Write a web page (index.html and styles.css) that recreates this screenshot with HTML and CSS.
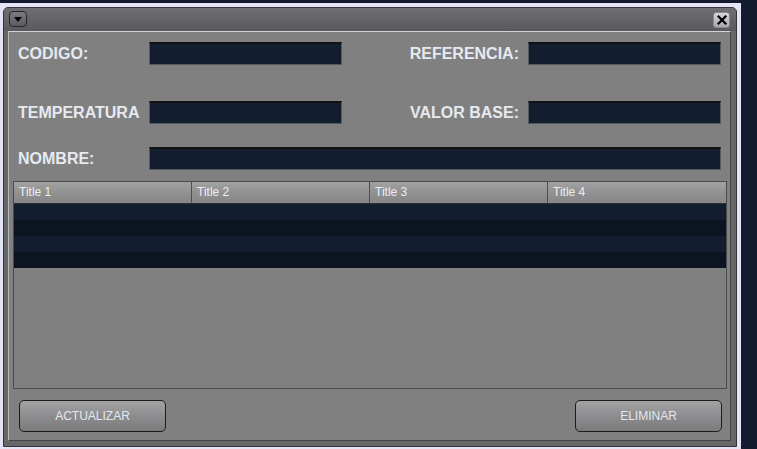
FILE: index.html
```html
<!DOCTYPE html>
<html>
<head>
<meta charset="utf-8">
<link rel="stylesheet" href="styles.css">
</head>
<body>
<div class="screen">
  <div class="window">
    <div class="titlebar">
      <button class="tb-btn tb-toggle" aria-label="menu">
        <svg width="8" height="5" viewBox="0 0 8 5"><polygon points="0,0 8,0 4,5" fill="#000"/></svg>
      </button>
      <button class="tb-btn tb-close" aria-label="close">
        <svg width="10" height="10" viewBox="0 0 10 10"><path d="M1.5 1.5 L8.5 8.5 M8.5 1.5 L1.5 8.5" stroke="#000" stroke-width="2.2" stroke-linecap="square"/></svg>
      </button>
    </div>
    <div class="content">
      <div class="form">
        <div class="row row1">
          <label class="lbl">CODIGO:</label>
          <div class="field"></div>
          <label class="lbl lbl-right">REFERENCIA:</label>
          <div class="field"></div>
        </div>
        <div class="row row2">
          <label class="lbl">TEMPERATURA</label>
          <div class="field"></div>
          <label class="lbl lbl-right">VALOR BASE:</label>
          <div class="field"></div>
        </div>
        <div class="row row3">
          <label class="lbl">NOMBRE:</label>
          <div class="field field-wide"></div>
        </div>
      </div>
      <div class="table">
        <div class="thead">
          <div class="th">Title 1</div>
          <div class="th">Title 2</div>
          <div class="th">Title 3</div>
          <div class="th">Title 4</div>
        </div>
        <div class="tr"></div>
        <div class="tr alt"></div>
        <div class="tr"></div>
        <div class="tr alt"></div>
      </div>
      <div class="actions">
        <button class="btn">ACTUALIZAR</button>
        <button class="btn">ELIMINAR</button>
      </div>
    </div>
  </div>
</div>
</body>
</html>
```
FILE: styles.css
```css
html, body {
  margin: 0;
  padding: 0;
}
body {
  background: #121c2e;
  width: 757px;
  height: 449px;
  overflow: hidden;
  font-family: "Liberation Sans", Arial, sans-serif;
}
.screen {
  margin-top: 3px;
  width: 741px;
  height: 446px;
  background: #e4e4f6;
  padding: 4px 4px 2px 3px;
  box-sizing: border-box;
}
.window {
  height: 440px;
  border: 1px solid #363636;
  border-radius: 5px 5px 0 0;
  background: #676767;
  display: flex;
  flex-direction: column;
  box-sizing: border-box;
  overflow: hidden;
}
.titlebar {
  height: 23px;
  flex: none;
  display: flex;
  justify-content: space-between;
  align-items: flex-start;
  padding: 3px 6px 0 5px;
  box-sizing: border-box;
  background: linear-gradient(#6f6f73, #5a5a5e);
}
.tb-btn {
  padding: 0;
  margin: 0;
  display: flex;
  align-items: center;
  justify-content: center;
  box-sizing: border-box;
}
.tb-toggle {
  width: 18px;
  height: 16px;
  border: 1px solid #262626;
  border-radius: 4px;
  background: linear-gradient(#7c7c7e, #5c5c5e);
}
.tb-close {
  width: 17px;
  height: 16px;
  margin-top: 1px;
  border: 1px solid #8a8a8a;
  border-radius: 3px;
  background: linear-gradient(#d6d6d8, #a9a9ab);
}
.content {
  flex: 1;
  margin: 0 5px 5px 4px;
  background: #808080;
  border-top: 1px solid #d2d2d2;
  border-left: 1px solid #b8b8b8;
  border-right: 1px solid #454545;
  border-bottom: 1px solid #454545;
  padding: 10px 3px 8px 4px;
  display: flex;
  flex-direction: column;
  box-sizing: border-box;
}
.form {
  padding: 0 6px 0 5px;
}
.row {
  display: flex;
  align-items: center;
  height: 23px;
}
.row2 {
  margin-top: 36px;
}
.row3 {
  margin-top: 23px;
}
.lbl {
  width: 131px;
  flex: none;
  font-weight: bold;
  font-size: 16px;
  color: #e6eaf0;
  white-space: nowrap;
}
.lbl-right {
  flex: 1;
  width: auto;
  text-align: right;
  padding-right: 9px;
}
.field {
  width: 193px;
  height: 23px;
  flex: none;
  box-sizing: border-box;
  background: #121d30;
  border: 1px solid #555a60;
  border-top: 2px solid #121212;
}
.field-wide {
  flex: 1;
  width: auto;
}
.table {
  margin-top: 11px;
  height: 208px;
  box-sizing: border-box;
  border: 1px solid #4a4a4a;
  background: #808080;
}
.thead {
  display: grid;
  grid-template-columns: repeat(4, 1fr);
  height: 22px;
  box-sizing: border-box;
  border-bottom: 1px solid #2e2e2e;
  background: linear-gradient(#a2a2a2, #8e8e8e 60%, #878787);
}
.th {
  font-size: 12px;
  color: #eceef2;
  padding-left: 5px;
  line-height: 21px;
  border-right: 1px solid #4e4e4e;
}
.th:last-child {
  border-right: none;
}
.tr {
  height: 16px;
  background: #121d2f;
}
.tr.alt {
  background: #0d1421;
}
.actions {
  margin-top: 11px;
  display: flex;
  justify-content: space-between;
  padding: 0 5px 0 6px;
}
.btn {
  width: 147px;
  height: 32px;
  margin: 0;
  border: 1px solid #1c1c1c;
  border-radius: 5px;
  background: linear-gradient(#a3a3a5, #8d8d8f 50%, #7b7b7d);
  font-family: "Liberation Sans", Arial, sans-serif;
  font-size: 12px;
  color: #e4e8ee;
  padding: 0;
}
```
